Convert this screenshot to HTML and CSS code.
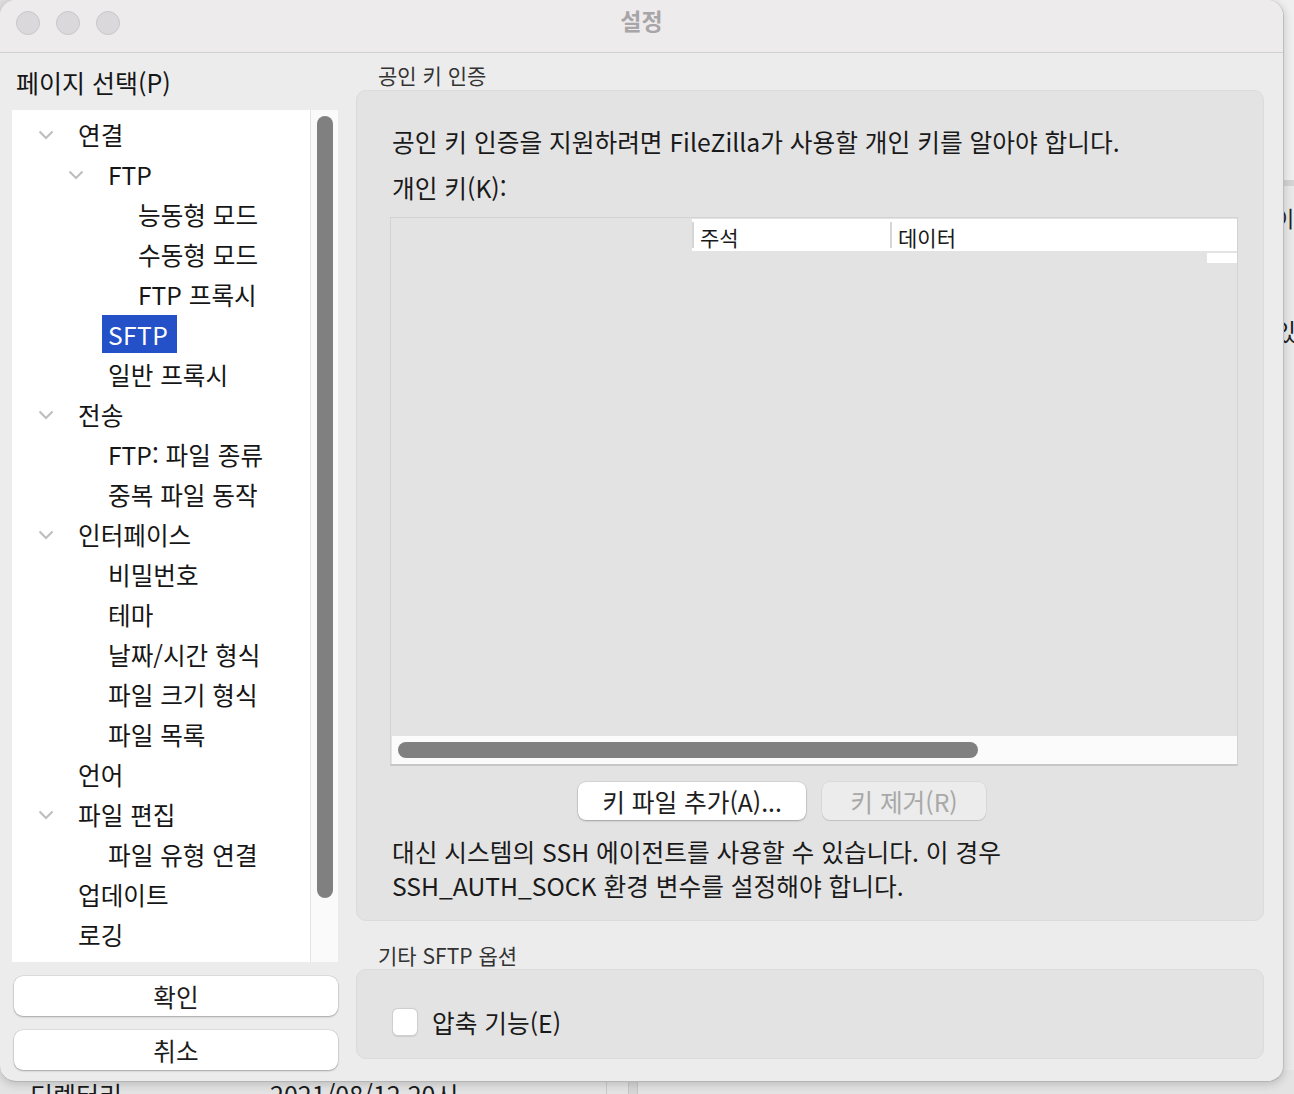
FILE: index.html
```html
<!DOCTYPE html>
<html lang="ko">
<head>
<meta charset="utf-8">
<title>설정</title>
<link rel="stylesheet" href="styles.css">
</head>
<body>
<div class="desktop">
  <div class="bg-app">
    <div class="bg-right">
      <div class="bg-right-top"></div>
      <div class="bg-right-head">이름</div>
      <div class="bg-right-row">있</div>
    </div>
    <div class="bg-bottom">
      <span class="bg-cell bg-cell-name">디렉터리</span>
      <span class="bg-cell bg-cell-date">2021/08/12 20시</span>
      <span class="bg-vline bg-vline-1"></span>
      <span class="bg-vline bg-vline-2"></span>
    </div>
  </div>

  <div class="window">
    <div class="titlebar">
      <div class="lights">
        <span class="light"></span>
        <span class="light"></span>
        <span class="light"></span>
      </div>
      <div class="title">설정</div>
    </div>

    <div class="content">
      <div class="left">
        <div class="page-heading">페이지 선택(P)</div>
        <div class="tree">
          <ul class="tree-list">
            <li class="node lv0"><span class="chev"><svg width="16" height="10" viewBox="0 0 16 10"><path d="M1.5 1.5 L8 8 L14.5 1.5" fill="none" stroke="#bdbdbd" stroke-width="2"/></svg></span><span class="label">연결</span></li>
            <li class="node lv1"><span class="chev"><svg width="16" height="10" viewBox="0 0 16 10"><path d="M1.5 1.5 L8 8 L14.5 1.5" fill="none" stroke="#bdbdbd" stroke-width="2"/></svg></span><span class="label">FTP</span></li>
            <li class="node lv2"><span class="chev"></span><span class="label">능동형 모드</span></li>
            <li class="node lv2"><span class="chev"></span><span class="label">수동형 모드</span></li>
            <li class="node lv2"><span class="chev"></span><span class="label">FTP 프록시</span></li>
            <li class="node lv1"><span class="chev"></span><span class="label selected">SFTP</span></li>
            <li class="node lv1"><span class="chev"></span><span class="label">일반 프록시</span></li>
            <li class="node lv0"><span class="chev"><svg width="16" height="10" viewBox="0 0 16 10"><path d="M1.5 1.5 L8 8 L14.5 1.5" fill="none" stroke="#bdbdbd" stroke-width="2"/></svg></span><span class="label">전송</span></li>
            <li class="node lv1"><span class="chev"></span><span class="label">FTP: 파일 종류</span></li>
            <li class="node lv1"><span class="chev"></span><span class="label">중복 파일 동작</span></li>
            <li class="node lv0"><span class="chev"><svg width="16" height="10" viewBox="0 0 16 10"><path d="M1.5 1.5 L8 8 L14.5 1.5" fill="none" stroke="#bdbdbd" stroke-width="2"/></svg></span><span class="label">인터페이스</span></li>
            <li class="node lv1"><span class="chev"></span><span class="label">비밀번호</span></li>
            <li class="node lv1"><span class="chev"></span><span class="label">테마</span></li>
            <li class="node lv1"><span class="chev"></span><span class="label">날짜/시간 형식</span></li>
            <li class="node lv1"><span class="chev"></span><span class="label">파일 크기 형식</span></li>
            <li class="node lv1"><span class="chev"></span><span class="label">파일 목록</span></li>
            <li class="node lv0"><span class="chev"></span><span class="label">언어</span></li>
            <li class="node lv0"><span class="chev"><svg width="16" height="10" viewBox="0 0 16 10"><path d="M1.5 1.5 L8 8 L14.5 1.5" fill="none" stroke="#bdbdbd" stroke-width="2"/></svg></span><span class="label">파일 편집</span></li>
            <li class="node lv1"><span class="chev"></span><span class="label">파일 유형 연결</span></li>
            <li class="node lv0"><span class="chev"></span><span class="label">업데이트</span></li>
            <li class="node lv0"><span class="chev"></span><span class="label">로깅</span></li>
          </ul>
          <div class="vscroll"><div class="vthumb"></div></div>
        </div>
        <button class="btn btn-wide">확인</button>
        <button class="btn btn-wide">취소</button>
      </div>

      <div class="right">
        <div class="group-label">공인 키 인증</div>
        <div class="group group-keys">
          <p class="text line">공인 키 인증을 지원하려면 FileZilla가 사용할 개인 키를 알아야 합니다.</p>
          <p class="text line line-2">개인 키(K):</p>
          <div class="keylist">
            <div class="keylist-head">
              <div class="col col-comment">주석</div>
              <div class="col col-data">데이터</div>
            </div>
            <div class="keylist-corner"></div>
            <div class="keylist-body"></div>
            <div class="hscroll"><div class="hthumb"></div></div>
          </div>
          <div class="key-buttons">
            <button class="btn btn-key">키 파일 추가(A)...</button>
            <button class="btn btn-key btn-disabled">키 제거(R)</button>
          </div>
          <p class="text agent">대신 시스템의 SSH 에이전트를 사용할 수 있습니다. 이 경우<br>SSH_AUTH_SOCK 환경 변수를 설정해야 합니다.</p>
        </div>

        <div class="group-label group-label-2">기타 SFTP 옵션</div>
        <div class="group group-opts">
          <label class="check">
            <span class="checkbox"></span>
            <span class="text">압축 기능(E)</span>
          </label>
        </div>
      </div>
    </div>
  </div>
</div>
</body>
</html>
```

FILE: styles.css
```css
* { box-sizing: border-box; }

html, body {
  margin: 0;
  padding: 0;
}

body {
  width: 1294px;
  height: 1094px;
  overflow: hidden;
  background: #dedede;
  font-family: "Noto Sans CJK KR", "Noto Sans", sans-serif;
  color: #1d1d1d;
}

.desktop {
  position: relative;
  width: 1294px;
  height: 1094px;
}

/* background application peeking out */
.bg-app {
  position: absolute;
  inset: 0;
}

.bg-right {
  position: absolute;
  left: 1270px;
  top: 0;
  width: 24px;
  height: 1094px;
  background: #e9e9e9;
}

.bg-right-top {
  height: 186px;
  background: #efefef;
  border-bottom: 6px solid #d4d4d4;
}

.bg-right-head {
  position: absolute;
  left: 4px;
  top: 202px;
  font-size: 22px;
  line-height: 30px;
  color: #222;
  white-space: nowrap;
}

.bg-right-row {
  position: absolute;
  left: 4px;
  top: 316px;
  font-size: 24px;
  line-height: 30px;
  color: #222;
}

.bg-bottom {
  position: absolute;
  left: 0;
  top: 1070px;
  width: 1294px;
  height: 24px;
  background: #e3e3e3;
}

.bg-cell {
  position: absolute;
  top: 9px;
  font-size: 25px;
  line-height: 30px;
  color: #1a1a1a;
  white-space: nowrap;
}

.bg-cell-name { left: 30px; }
.bg-cell-date { left: 270px; }

.bg-vline {
  position: absolute;
  top: 0;
  height: 24px;
  width: 1px;
  background: #c9c9c9;
}
.bg-vline-1 { left: 606px; }
.bg-vline-2 { left: 628px; width: 10px; background: #d6d6d6; border-left: 1px solid #c6c6c6; border-right: 1px solid #c6c6c6; }

/* window */
.window {
  position: absolute;
  left: 0;
  top: 0;
  width: 1284px;
  height: 1082px;
  background: #ececec;
  border-radius: 16px;
  border-right: 1px solid #bdbdbd;
  border-bottom: 1px solid #b5b5b5;
  box-shadow: 0 2px 10px rgba(0, 0, 0, 0.18);
  overflow: hidden;
  display: flex;
  flex-direction: column;
}

.titlebar {
  position: relative;
  height: 53px;
  flex: none;
  background: #eeebed;
  border-bottom: 1px solid #d2d0d2;
  display: flex;
  align-items: center;
}

.lights {
  display: flex;
  gap: 16px;
  padding-left: 16px;
  margin-top: -6px;
}

.light {
  width: 24px;
  height: 24px;
  border-radius: 50%;
  background: #dad8da;
  border: 1px solid #c8c6c8;
}

.title {
  position: absolute;
  left: 0;
  right: 0;
  top: 4px;
  text-align: center;
  font-size: 23px;
  font-weight: 700;
  color: #a7a5a7;
  line-height: 32px;
}

.content {
  flex: 1;
  display: flex;
  gap: 18px;
  padding: 0 20px 0 12px;
}

/* left column */
.left {
  width: 326px;
  flex: none;
  display: flex;
  flex-direction: column;
  padding-top: 13px;
}

.page-heading {
  font-size: 25px;
  line-height: 32px;
  padding-left: 4px;
  color: #161616;
}

.tree {
  margin-top: 12px;
  height: 852px;
  background: #ffffff;
  display: flex;
}

.tree-list {
  list-style: none;
  margin: 0;
  padding: 4px 0 0 0;
  flex: 1;
}

.node {
  height: 40px;
  display: flex;
  align-items: center;
  font-size: 24.6px;
  color: #161616;
  white-space: nowrap;
}

.lv0 { padding-left: 26px; }
.lv1 { padding-left: 56px; }
.lv2 { padding-left: 86px; }

.chev {
  width: 40px;
  flex: none;
  display: flex;
  align-items: center;
  padding-top: 2px;
}

.label {
  line-height: 38px;
}

.selected {
  background: #2451c8;
  color: #ffffff;
  padding: 0 9px 0 6px;
  margin-left: -6px;
  letter-spacing: 0.4px;
}

.vscroll {
  width: 28px;
  flex: none;
  border-left: 1px solid #e4e4e4;
  background: #fafafa;
  padding: 6px 0 0 6px;
}

.vthumb {
  width: 16px;
  height: 782px;
  border-radius: 8px;
  background: #808080;
}

.btn {
  font-family: inherit;
  background: #ffffff;
  border: none;
  border-radius: 9px;
  box-shadow: 0 0 0 0.5px rgba(0, 0, 0, 0.12), 0 1px 2px rgba(0, 0, 0, 0.25);
  color: #1d1d1d;
  padding: 0;
}

.btn-wide {
  margin-left: 2px;
  width: 324px;
  height: 40px;
  font-size: 24.6px;
  line-height: 34px;
  margin-top: 14px;
}

/* right column */
.right {
  width: 908px;
  flex: none;
  padding-top: 8px;
  display: flex;
  flex-direction: column;
}

.group-label {
  font-size: 21px;
  line-height: 28px;
  padding-left: 22px;
  color: #333333;
  margin-bottom: 1px;
}

.group-label-2 {
  margin-top: 20px;
  margin-bottom: 0;
}

.group {
  background: #e3e3e3;
  border: 1px solid #dbdbdb;
  border-radius: 10px;
}

.group-keys {
  padding: 32px 25px 18px 35px;
}

.text {
  margin: 0;
  font-size: 24.7px;
  color: #1a1a1a;
}

.line {
  line-height: 36px;
}

.line-2 {
  margin-top: 10px;
}

.keylist {
  margin: 12px 0 0 -2px;
  height: 549px;
  border: 1px solid #d3d3d3;
  border-bottom: 2px solid #c7c7c7;
  display: flex;
  flex-direction: column;
}

.keylist-head {
  margin: 1px 0 0 301px;
  height: 32px;
  background: #ffffff;
  display: flex;
  font-size: 21px;
  color: #1a1a1a;
}

.col {
  border-left: 2px solid #d6d6d6;
  padding-left: 6px;
  line-height: 30px;
  margin: 3px 0 3px 0;
  height: 26px;
}

.col-comment { width: 198px; }
.col-data { flex: 1; }

.keylist-corner {
  margin: 2px 0 0 auto;
  width: 30px;
  height: 10px;
  background: #ffffff;
}

.keylist-body {
  flex: 1;
}

.hscroll {
  height: 28px;
  background: #fbfbfb;
  padding: 6px 0 0 6px;
  margin-left: 1px;
}

.hthumb {
  width: 580px;
  height: 16px;
  border-radius: 8px;
  background: #808080;
}

.key-buttons {
  display: flex;
  gap: 16px;
  margin: 16px 0 0 186px;
}

.btn-key {
  height: 38px;
  font-size: 24.7px;
  line-height: 34px;
  padding: 0;
  border-radius: 8px;
}

.btn-key:first-child { width: 228px; }
.btn-disabled {
  width: 164px;
  background: #ececec;
  color: #a8a8a8;
  box-shadow: 0 0 0 0.5px rgba(0, 0, 0, 0.08), 0 1px 1px rgba(0, 0, 0, 0.12);
}

.agent {
  margin-top: 14px;
  line-height: 34px;
}

.group-opts {
  height: 90px;
  display: flex;
  align-items: center;
  padding: 16px 0 0 35px;
}

.check {
  display: flex;
  align-items: center;
  gap: 14px;
}

.check .text {
  margin-top: -1px;
}

.checkbox {
  width: 26px;
  height: 28px;
  background: #ffffff;
  border: 1px solid #cfcfcf;
  border-radius: 6px;
  box-shadow: 0 0.5px 1px rgba(0, 0, 0, 0.1);
}
```
